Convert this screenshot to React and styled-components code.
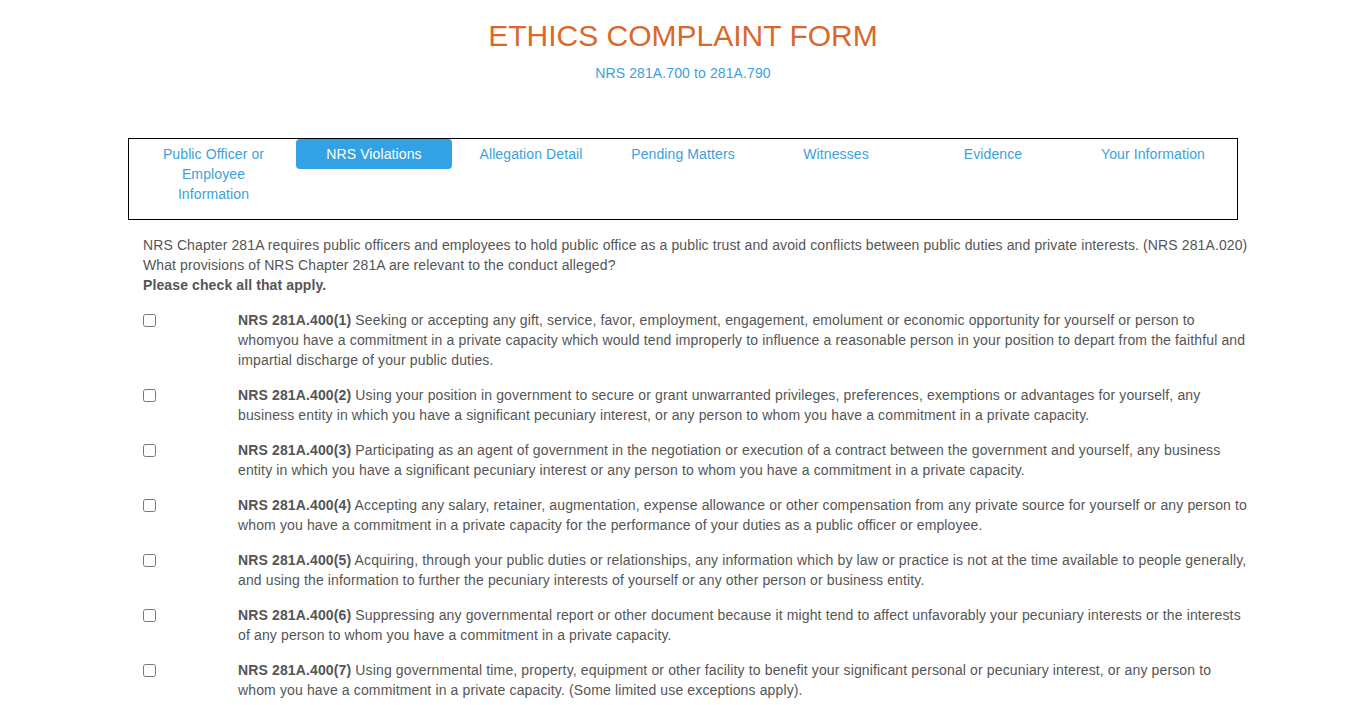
import React from "react";
import styled, { createGlobalStyle } from "styled-components";

const tabs = [
  "Public Officer or Employee Information",
  "NRS Violations",
  "Allegation Detail",
  "Pending Matters",
  "Witnesses",
  "Evidence",
  "Your Information",
];

const violations = [
  {
    code: "NRS 281A.400(1)",
    text: "Seeking or accepting any gift, service, favor, employment, engagement, emolument or economic opportunity for yourself or person to whomyou have a commitment in a private capacity which would tend improperly to influence a reasonable person in your position to depart from the faithful and impartial discharge of your public duties.",
  },
  {
    code: "NRS 281A.400(2)",
    text: "Using your position in government to secure or grant unwarranted privileges, preferences, exemptions or advantages for yourself, any business entity in which you have a significant pecuniary interest, or any person to whom you have a commitment in a private capacity.",
  },
  {
    code: "NRS 281A.400(3)",
    text: "Participating as an agent of government in the negotiation or execution of a contract between the government and yourself, any business entity in which you have a significant pecuniary interest or any person to whom you have a commitment in a private capacity.",
  },
  {
    code: "NRS 281A.400(4)",
    text: "Accepting any salary, retainer, augmentation, expense allowance or other compensation from any private source for yourself or any person to whom you have a commitment in a private capacity for the performance of your duties as a public officer or employee.",
  },
  {
    code: "NRS 281A.400(5)",
    text: "Acquiring, through your public duties or relationships, any information which by law or practice is not at the time available to people generally, and using the information to further the pecuniary interests of yourself or any other person or business entity.",
  },
  {
    code: "NRS 281A.400(6)",
    text: "Suppressing any governmental report or other document because it might tend to affect unfavorably your pecuniary interests or the interests of any person to whom you have a commitment in a private capacity.",
  },
  {
    code: "NRS 281A.400(7)",
    text: "Using governmental time, property, equipment or other facility to benefit your significant personal or pecuniary interest, or any person to whom you have a commitment in a private capacity. (Some limited use exceptions apply).",
  },
];

const App = () => {
  return (
    <>
      <GlobalStyle />
      <Page>
        <Header>
          <Title>ETHICS COMPLAINT FORM</Title>
          <Subtitle>NRS 281A.700 to 281A.790</Subtitle>
        </Header>

        <TabBox>
          <TabList>
            {tabs.map((t, i) => (
              <Tab key={t} active={i === 1}>
                {t}
              </Tab>
            ))}
          </TabList>
        </TabBox>

        <Content>
          <Intro>
            NRS Chapter 281A requires public officers and employees to hold
            public office as a public trust and avoid conflicts between public
            duties and private interests. (NRS 281A.020)
            <br />
            What provisions of NRS Chapter 281A are relevant to the conduct
            alleged?
            <br />
            <strong>Please check all that apply.</strong>
          </Intro>

          {violations.map((v) => (
            <Item key={v.code}>
              <CheckCell>
                <input type="checkbox" />
              </CheckCell>
              <ItemText>
                <strong>{v.code}</strong> {v.text}
              </ItemText>
            </Item>
          ))}
        </Content>
      </Page>
    </>
  );
};

export default App;

const GlobalStyle = createGlobalStyle`
  body {
    margin: 0;
    background: #fff;
    font-family: "Liberation Sans", Arial, sans-serif;
    font-size: 14px;
    line-height: 20px;
    letter-spacing: 0.11px;
    color: #555;
  }
`;

const Page = styled.div`
  width: 1110px;
  margin: 0 auto;
`;

const Header = styled.div`
  text-align: center;
  padding-top: 17px;
  height: 138px;
  box-sizing: border-box;
`;

const Title = styled.h1`
  margin: 0;
  font-weight: 400;
  font-size: 30px;
  line-height: 38px;
  letter-spacing: 0;
  color: #d9692b;
`;

const Subtitle = styled.div`
  margin-top: 8px;
  font-size: 14px;
  line-height: 20px;
  color: #3ba1dc;
`;

const TabBox = styled.div`
  border: 1px solid #000;
  height: 82px;
  box-sizing: border-box;
`;

const TabList = styled.div`
  display: grid;
  grid-template-columns: 161px 156px 154px 146px 156px 154px 162px;
  column-gap: 2px;
  padding-left: 4px;
`;

const Tab = styled.div`
  padding: 5px 15px;
  text-align: center;
  border-radius: 4px;
  color: ${(p) => (p.active ? "#fff" : "#3ba1dc")};
  background: ${(p) => (p.active ? "#32a2e4" : "transparent")};
  align-self: start;
  cursor: pointer;
`;

const Content = styled.div`
  padding: 15px 0 0 15px;
  width: 1107px;
`;

const Intro = styled.p`
  margin: 0 0 15px;

  strong {
    font-weight: 700;
  }
`;

const Item = styled.div`
  display: grid;
  grid-template-columns: 95px 1fr;
  margin-bottom: 15px;
`;

const CheckCell = styled.div`
  input {
    margin: 4px 0 0;
    width: 13px;
    height: 13px;
  }
`;

const ItemText = styled.div`
  letter-spacing: 0.135px;

  strong {
    font-weight: 700;
  }
`;
